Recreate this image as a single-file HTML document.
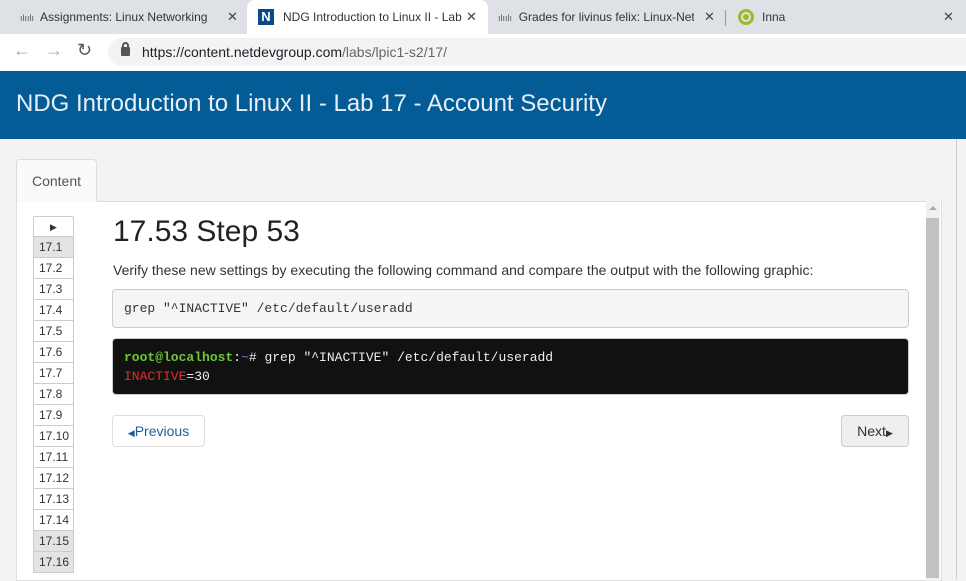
<!DOCTYPE html><html><head><style>
*{box-sizing:border-box;margin:0;padding:0}
body{width:966px;height:574px;overflow:hidden;font-family:"Liberation Sans",Arial,sans-serif;background:#f3f3f3;position:relative}
.abs{position:absolute}
.tabs{left:0;top:0;width:966px;height:34px;background:#dee1e6}
.tab{top:0;height:34px;font-size:12px;color:#333;line-height:34px}
.x{font-size:13px;color:#444}
.addr{left:0;top:34px;width:966px;height:37px;background:#fff}
.url{left:108px;top:38px;width:870px;height:28px;border-radius:14px;background:#f1f3f4;font-size:14px;line-height:28px;padding-left:34px;color:#202124}
.hdr{left:0;top:71px;width:966px;height:68px;background:#045c96;color:#e6eef6;font-size:24px;line-height:66px;padding-left:16px}
.ctab{left:16px;top:159px;width:81px;height:43px;background:#fafafa;border:1px solid #ddd;border-bottom:none;border-radius:4px 4px 0 0;font-size:14px;color:#555;text-align:center;line-height:42px;z-index:2}
.panel{left:16px;top:201px;width:926px;height:380px;background:#fff;border:1px solid #ddd}
.side{left:33px;top:216px;width:41px}
.side div{height:21px;border:1px solid #ccc;border-top:none;font-size:12px;line-height:20px;padding-left:5px;color:#333;background:#fff}
.side div.g{background:#e3e3e3}
.pre{font-family:"Liberation Mono",monospace;font-size:13px}
</style></head><body>
<div class="abs tabs"></div>
<div class="abs" style="left:247px;top:0;width:241px;height:34px;background:#fff;border-radius:8px 8px 0 0"></div>
<div class="abs tab" style="left:20px"><span style="font-size:9px;color:#555">ılıılı</span>&nbsp; Assignments: Linux Networking</div>
<div class="abs tab x" style="left:227px">✕</div>
<div class="abs" style="left:258px;top:9px;width:16px;height:16px;background:#0b4a8a;color:#fff;font-weight:bold;font-size:13px;text-align:center;line-height:16px">N</div>
<div class="abs tab" style="left:283px;width:190px;overflow:hidden;white-space:nowrap">NDG Introduction to Linux II - Lab</div>
<div class="abs tab x" style="left:466px">✕</div>
<div class="abs tab" style="left:498px"><span style="font-size:9px;color:#555">ılıılı</span>&nbsp; <span style="display:inline-block;width:175px;overflow:hidden;white-space:nowrap;vertical-align:top">Grades for livinus felix: Linux-Netw</span></div>
<div class="abs tab x" style="left:704px">✕</div>
<div class="abs" style="left:725px;top:10px;width:1px;height:16px;background:#999"></div>
<div class="abs" style="left:738px;top:9px;width:16px;height:16px;border:3px solid #9bbb2a;border-radius:50%"><div style="margin:2px;width:6px;height:6px;border-radius:50%;background:#9bbb2a"></div></div>
<div class="abs tab" style="left:762px">Inna</div>
<div class="abs tab x" style="left:943px">✕</div>
<div class="abs addr"></div>
<div class="abs" style="left:13px;top:40px;font-size:18px;color:#aaa">←</div>
<div class="abs" style="left:45px;top:40px;font-size:18px;color:#aaa">→</div>
<div class="abs" style="left:77px;top:40px;font-size:18px;color:#555">↻</div>
<div class="abs url">https://content.netdevgroup.com<span style="color:#666">/labs/lpic1-s2/17/</span></div>
<div class="abs" style="left:121px;top:47px;width:9px;height:9px;background:#555;border-radius:1px"></div>
<div class="abs" style="left:122px;top:42px;width:7px;height:8px;border:2px solid #555;border-radius:4px 4px 0 0"></div>
<div class="abs hdr">NDG Introduction to Linux II - Lab 17 - Account Security</div>
<div class="abs" style="left:956px;top:139px;width:1px;height:440px;background:#ccc"></div>
<div class="abs ctab">Content</div>
<div class="abs panel"></div>
<div class="abs" style="left:926px;top:201px;width:14px;height:380px;background:#f1f1f1"></div>
<div class="abs" style="left:926px;top:218px;width:13px;height:360px;background:#c1c1c1"></div>
<div class="abs" style="left:929px;top:206px;width:0;height:0;border:4px solid transparent;border-bottom:4px solid #aaa;border-top:none"></div>
<div class="abs side">
<div style="border-top:1px solid #ccc;border-radius:2px 2px 0 0;text-align:center;padding:0;font-size:9px">▶</div>
<div class="g">17.1</div><div>17.2</div><div>17.3</div><div>17.4</div><div>17.5</div><div>17.6</div><div>17.7</div><div>17.8</div><div>17.9</div><div>17.10</div><div>17.11</div><div>17.12</div><div>17.13</div><div>17.14</div><div class="g">17.15</div><div class="g">17.16</div>
</div>
<div class="abs" style="left:113px;top:215px;font-size:30px;color:#222">17.53 Step 53</div>
<div class="abs" style="left:113px;top:262px;font-size:14px;color:#333">Verify these new settings by executing the following command and compare the output with the following graphic:</div>
<div class="abs pre" style="left:112px;top:289px;width:797px;height:39px;background:#f5f5f5;border:1px solid #ccc;border-radius:4px;line-height:37px;padding-left:11px;color:#333">grep "^INACTIVE" /etc/default/useradd</div>
<div class="abs pre" style="left:112px;top:338px;width:797px;height:57px;background:#111;border:1px solid #ccc;border-radius:4px;padding:9px 11px;line-height:19px;color:#eee"><b style="color:#6dc53a">root@localhost</b>:<span style="color:#5b8fd8">~</span># grep "^INACTIVE" /etc/default/useradd<br><span style="color:#e0302a">INACTIVE</span>=30</div>
<div class="abs" style="left:112px;top:415px;width:93px;height:32px;border:1px solid #ddd;border-radius:4px;font-size:14px;line-height:30px;color:#1f5f94;text-align:center"><span style="font-size:9px">◀</span>Previous</div>
<div class="abs" style="left:841px;top:415px;width:68px;height:32px;border:1px solid #ccc;border-radius:4px;background:#efefef;font-size:14px;line-height:30px;color:#333;text-align:center">Next<span style="font-size:9px">▶</span></div>
</body></html>
